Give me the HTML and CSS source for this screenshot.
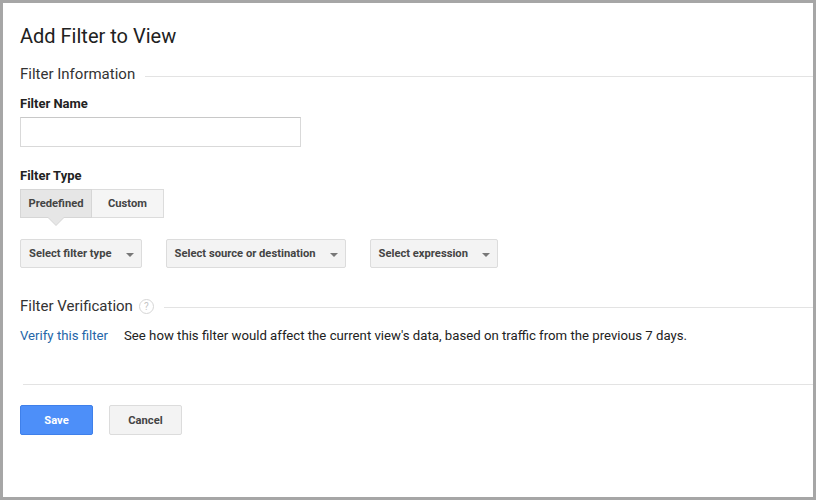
FILE: index.html
```html
<!DOCTYPE html>
<html lang="en">
<head>
<meta charset="UTF-8">
<title>Add Filter to View</title>
<link rel="stylesheet" href="styles.css">
</head>
<body>

<div class="frame">
  <h1 class="title">Add Filter to View</h1>

  <div class="section-head">
    <span>Filter Information</span>
    <span class="rule"></span>
  </div>

  <label class="field-label" for="filterName">Filter Name</label>
  <input class="text-input" id="filterName" type="text">

  <div class="field-label gap-top">Filter Type</div>
  <div class="toggle">
    <button class="toggle-btn selected">Predefined</button>
    <button class="toggle-btn">Custom</button>
  </div>

  <div class="select-row">
    <div class="select">Select filter type <span class="caret"></span></div>
    <div class="select">Select source or destination <span class="caret"></span></div>
    <div class="select">Select expression <span class="caret"></span></div>
  </div>

  <div class="section-head verify-head">
    <span>Filter Verification</span>
    <span class="help">?</span>
    <span class="rule"></span>
  </div>

  <div class="verify-row">
    <a class="link" href="#">Verify this filter</a>
    <span>See how this filter would affect the current view's data, based on traffic from the previous 7 days.</span>
  </div>

  <div class="divider"></div>

  <div class="actions">
    <button class="btn btn-primary">Save</button>
    <button class="btn">Cancel</button>
  </div>
</div>

</body>
</html>
```

FILE: styles.css
```css
html, body {
  margin: 0;
  padding: 0;
}
body {
  font-family: Roboto, "Liberation Sans", Arial, sans-serif;
  color: #222;
  background-color: #fff;
}
.frame {
  height: 500px;
  box-sizing: border-box;
  border: 3px solid #a6a6a6;
  padding: 21px 0 0 17px;
}
.title {
  margin: 0;
  font-size: 20px;
  line-height: 24px;
  font-weight: 400;
  color: #212121;
}
.section-head {
  display: flex;
  align-items: flex-start;
  margin-top: 16px;
  font-size: 15px;
  line-height: 20px;
  color: #333;
}
.section-head .rule {
  flex: 1;
  height: 1px;
  margin: 12px 0 0 10px;
  background-color: #e3e3e3;
}
.verify-head {
  margin-top: 28px;
}
.verify-head .rule {
  margin-top: 11px;
}
.help {
  width: 13px;
  height: 13px;
  margin: 3px 0 0 6px;
  border: 1px solid #d6d6d6;
  border-radius: 50%;
  font-size: 10px;
  line-height: 13px;
  text-align: center;
  color: #c4c4c4;
}
.field-label {
  display: block;
  margin-top: 12px;
  font-size: 13px;
  line-height: 16px;
  font-weight: bold;
  color: #222;
}
.gap-top {
  margin-top: 21px;
}
.text-input {
  display: block;
  margin-top: 5px;
  width: 281px;
  height: 30px;
  box-sizing: border-box;
  border: 1px solid #d9d9d9;
  border-top-color: #c8c8c8;
  font-family: inherit;
  font-size: 13px;
}
.toggle {
  display: flex;
  margin-top: 5px;
}
.toggle-btn {
  position: relative;
  width: 72px;
  height: 29px;
  padding: 0;
  border: 1px solid #dcdcdc;
  background-color: #f5f5f5;
  font-family: inherit;
  font-size: 11.2px;
  font-weight: bold;
  color: #444;
}
.toggle-btn + .toggle-btn {
  border-left: none;
}
.toggle-btn.selected {
  background-color: #e6e6e6;
  border-color: #d6d6d6;
}
.toggle-btn.selected::before,
.toggle-btn.selected::after {
  content: "";
  position: absolute;
  left: 50%;
  width: 0;
  height: 0;
  border-left: 8px solid transparent;
  border-right: 8px solid transparent;
}
.toggle-btn.selected::before {
  top: 28px;
  margin-left: -8px;
  border-top: 8px solid #d6d6d6;
}
.toggle-btn.selected::after {
  top: 27px;
  margin-left: -8px;
  border-top: 8px solid #e6e6e6;
}
.select-row {
  display: flex;
  gap: 24px;
  margin-top: 21px;
}
.select {
  display: flex;
  align-items: center;
  gap: 14px;
  height: 29px;
  box-sizing: border-box;
  padding: 0 7px 0 8px;
  border: 1px solid #dcdcdc;
  border-radius: 2px;
  background-color: #f3f3f3;
  font-size: 11.2px;
  font-weight: bold;
  color: #444;
}
.caret {
  width: 0;
  height: 0;
  border-left: 4px solid transparent;
  border-right: 4px solid transparent;
  border-top: 4px solid #777;
  margin-top: 2px;
}
.verify-row {
  display: flex;
  gap: 16px;
  margin-top: 12px;
  font-size: 13.2px;
  line-height: 16px;
  color: #222;
}
.link {
  color: #2566a8;
  text-decoration: none;
}
.divider {
  height: 1px;
  margin: 40px 0 0 3px;
  background-color: #e3e3e3;
}
.actions {
  display: flex;
  gap: 16px;
  margin-top: 20px;
}
.btn {
  width: 73px;
  height: 30px;
  padding: 0;
  border: 1px solid #dcdcdc;
  border-radius: 2px;
  background-color: #f3f3f3;
  font-family: inherit;
  font-size: 11.2px;
  font-weight: bold;
  color: #444;
}
.btn-primary {
  background-color: #4d8ff9;
  border-color: #3f80ea;
  color: #fff;
}
```
